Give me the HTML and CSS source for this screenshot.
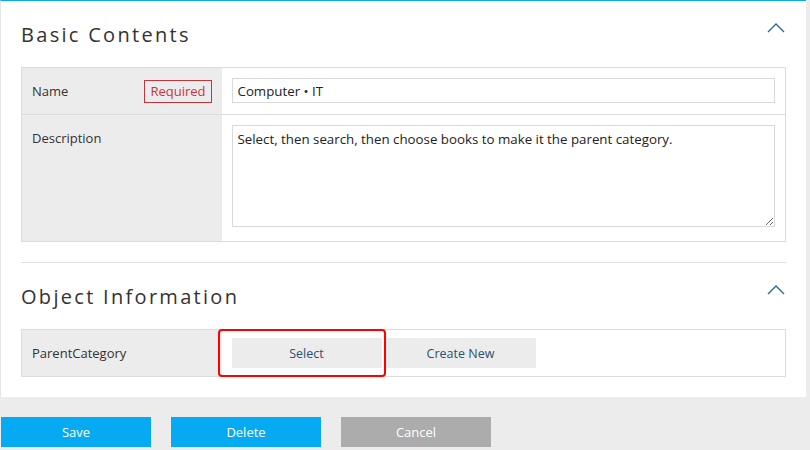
FILE: index.html
```html
<!DOCTYPE html>
<html>
<head>
<meta charset="utf-8">
<link rel="stylesheet" href="styles.css">
</head>
<body>
<div class="panel">
  <div class="section-head">
    <h2 class="section-title">Basic Contents</h2>
    <svg class="chevron" width="18" height="11" viewBox="0 0 18 11"><polyline points="1,10 9,2 17,10" fill="none" stroke="#2c6796" stroke-width="1.4"/></svg>
  </div>
  <table class="form-table">
    <tr>
      <th class="label-cell"><div class="label-flex"><span>Name</span><span class="required">Required</span></div></th>
      <td class="value-cell"><input class="text-input" type="text" value="Computer • IT"></td>
    </tr>
    <tr>
      <th class="label-cell label-top">Description</th>
      <td class="value-cell value-desc"><textarea class="text-area">Select, then search, then choose books to make it the parent category.</textarea></td>
    </tr>
  </table>
  <div class="divider"></div>
  <div class="section-head">
    <h2 class="section-title">Object Information</h2>
    <svg class="chevron" width="18" height="11" viewBox="0 0 18 11"><polyline points="1,10 9,2 17,10" fill="none" stroke="#2c6796" stroke-width="1.4"/></svg>
  </div>
  <table class="form-table">
    <tr>
      <th class="label-cell">ParentCategory</th>
      <td class="value-cell value-buttons"><button class="gray-btn">Select</button> <button class="gray-btn">Create New</button><div class="highlight"></div></td>
    </tr>
  </table>
</div>
<div class="footer">
  <button class="act-btn blue">Save</button>
  <button class="act-btn blue">Delete</button>
  <button class="act-btn gray">Cancel</button>
</div>
</body>
</html>
```
FILE: styles.css
```css
html, body {
  margin: 0;
  padding: 0;
}
body {
  background: #ececec;
  font-family: "Open Sans", "Noto Sans", sans-serif;
  font-size: 13px;
  color: #333;
  width: 810px;
  height: 450px;
  overflow: hidden;
}
.panel {
  width: 765px;
  background: #fff;
  border-left: 1px solid #e4e4e4;
  border-top: 1px solid #0aa8ef;
  padding: 0 20px 20px 20px;
}
.section-head {
  height: 66px;
  display: flex;
  align-items: center;
  justify-content: space-between;
}
.section-title {
  margin: 0;
  font-weight: normal;
  font-size: 20px;
  letter-spacing: 2.3px;
  color: #333;
  padding-top: 1px;
}
.chevron {
  margin-right: 1px;
  margin-top: -14px;
  display: block;
}
.form-table {
  width: 765px;
  border-collapse: collapse;
  border: 1px solid #dcdcdc;
  table-layout: fixed;
}
.form-table tr + tr {
  border-top: 1px solid #dcdcdc;
}
.label-cell {
  width: 200px;
  background: #ececec;
  text-align: left;
  font-weight: normal;
  padding: 0 10px;
  box-sizing: border-box;
  vertical-align: middle;
  color: #333;
}
.label-top {
  vertical-align: top;
  padding-top: 14px;
}
.label-flex {
  display: flex;
  align-items: center;
  justify-content: space-between;
}
.required {
  border: 1px solid #c3353b;
  color: #d0323c;
  font-size: 13px;
  height: 21px;
  line-height: 21px;
  padding: 0 5px;
}
.value-cell {
  padding: 10px 10px 11px 10px;
  vertical-align: top;
}
.value-desc {
  padding-bottom: 14px;
}
.text-input {
  display: block;
  box-sizing: border-box;
  width: 543px;
  height: 25px;
  border: 1px solid #d9d9d9;
  padding: 0 5px;
  font-family: inherit;
  font-size: 13.3px;
  color: #222;
  outline: none;
  margin: 0;
}
.text-area {
  display: block;
  box-sizing: border-box;
  width: 543px;
  height: 102px;
  border: 1px solid #d9d9d9;
  padding: 4px 5px;
  font-family: inherit;
  font-size: 13.3px;
  color: #222;
  resize: vertical;
  margin: 0;
  outline: none;
}
.divider {
  height: 1px;
  background: #e2e2e2;
  margin-top: 20px;
}
.value-buttons {
  position: relative;
  padding: 8px 10px;
  font-size: 0;
}
.gray-btn {
  width: 150px;
  height: 30px;
  border: none;
  background: #ececec;
  color: #2d5070;
  font-family: inherit;
  font-size: 12.5px;
  padding: 0;
  margin: 0;
  vertical-align: top;
}
.gray-btn + .gray-btn {
  margin-left: 4px;
}
.highlight {
  position: absolute;
  left: -4px;
  top: -1px;
  width: 164px;
  height: 44px;
  border: 2px solid #ff0000;
  border-radius: 4px;
}
.footer {
  display: flex;
  gap: 20px;
  padding: 20px 0 0 1px;
}
.act-btn {
  width: 150px;
  height: 30px;
  border: none;
  color: #fff;
  font-family: inherit;
  font-size: 13px;
  padding: 0;
  margin: 0;
}
.blue {
  background: #06aaf2;
}
.gray {
  background: #acacac;
}
```
